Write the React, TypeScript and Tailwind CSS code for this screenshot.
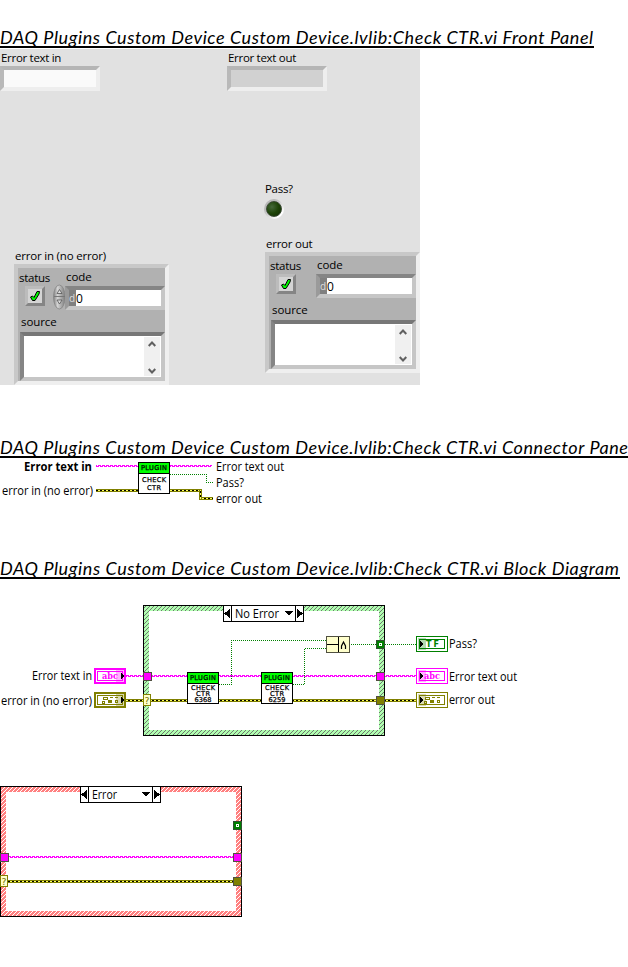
import React from "react";

const FONT = "'Open Sans','Noto Sans',sans-serif";

function Heading({ children, className }: { children: string; className: string }) {
  return (
    <h2
      className={`h-[22px] w-fit overflow-hidden whitespace-nowrap border-b-2 border-black font-[Lato,sans-serif] text-[18px] leading-[22px] italic text-black ${className}`}
    >
      {children}
    </h2>
  );
}

function Check() {
  return (
    <div className="flex h-[20px] w-[20px] items-center justify-center border-[3px] border-t-[#bcbcbc] border-l-[#bcbcbc] border-r-[#858585] border-b-[#858585] bg-[#d4d4d4]">
      <svg width="12" height="12" viewBox="0 0 12 12" className="shrink-0">
        <path d="M1.5 7 L3.5 6 L5 7.5 L8 1.5 L10.5 1.5 L10 4 L6 10.5 L3.5 10.5 Z" fill="#00f800" stroke="#000" strokeWidth="1" />
      </svg>
    </div>
  );
}

function Spinner() {
  return (
    <svg width="13" height="26" viewBox="0 0 13 26" className="shrink-0">
      <defs>
        <linearGradient id="spin" x1="0" x2="1">
          <stop offset="0" stopColor="#808080" />
          <stop offset=".35" stopColor="#d4d4d4" />
          <stop offset="1" stopColor="#7c7c7c" />
        </linearGradient>
      </defs>
      <ellipse cx="6.3" cy="13" rx="5.8" ry="12" fill="url(#spin)" stroke="#858585" strokeWidth=".8" />
      <path d="M1 12.5H12" stroke="#777" />
      <path d="M6.5 5.5L9 9.5H4Z M6.5 20L9 16H4Z" fill="#ddd" stroke="#555" strokeWidth=".8" />
    </svg>
  );
}

function Cluster({ title, spinner, titleClass }: { title: string; spinner?: boolean; titleClass: string }) {
  return (
    <div className="w-[155px]">
      <div className={`h-[17px] whitespace-nowrap pl-px leading-[17px] ${titleClass}`}>{title}</div>
      <div className="h-[121px] border-4 border-t-[#c8c8c8] border-l-[#c8c8c8] border-r-[#efefef] border-b-[#efefef] bg-[#b1b1b1]">
        <div className="flex h-[18px]">
          <div className="w-[48px] pl-px pt-[1px] leading-[18px] tracking-[-0.25px]">status</div>
          <div className="leading-[18px] tracking-[-0.1px]">code</div>
        </div>
        <div className="flex h-[27px]">
          <div className="w-[27px] pl-[7px]">
            <Check />
          </div>
          <div className="-mt-[2px] ml-[8px] w-[12px]">{spinner && <Spinner />}</div>
          <div className="flex h-[24px] w-[100px] border-4 border-t-[#858585] border-l-[#9a9a9a] border-r-[#c6c6c6] border-b-[#c6c6c6] bg-white">
            <div className="w-[7px] shrink-0 bg-[#808080] text-[10px] leading-[16px] text-[#ddd]">d</div>
            <div className="text-[12px] leading-[17px]">0</div>
          </div>
        </div>
        <div className="h-[19px] pl-[3px] leading-[18px] tracking-[-0.1px]">source</div>
        <div className="ml-[2px] flex h-[49px] w-[145px] justify-end border-4 border-t-[#777] border-l-[#858585] border-r-[#c6c6c6] border-b-[#c6c6c6] bg-white">
          <div className="mr-px mt-px flex h-[39px] w-[16px] flex-col items-center justify-between bg-[#f0f0f0] pt-[4px] pb-[2px] text-[#606060]">
            <svg width="8" height="6" viewBox="0 0 8 6"><path d="M.7 5L4 1.5L7.3 5" fill="none" stroke="currentColor" strokeWidth="2" /></svg>
            <svg width="8" height="6" viewBox="0 0 8 6"><path d="M.7 1L4 4.5L7.3 1" fill="none" stroke="currentColor" strokeWidth="2" /></svg>
          </div>
        </div>
      </div>
    </div>
  );
}

function FrontPanel() {
  return (
    <section className="mt-px flex h-[336px] w-[420px] overflow-hidden bg-[#e1e1e1]">
      <div className="w-[227px] shrink-0">
        <div className="h-[17px] pl-px leading-[18px] tracking-[-0.3px]">Error text in</div>
        <div className="h-[25px] w-[100px] border-4 border-t-[#b5b5b5] border-l-[#b9b9b9] border-r-[#eee] border-b-[#eee] bg-[#fafafa]" />
        <div className="mt-[156px] pl-[14px]">
          <Cluster title="error in (no error)" spinner titleClass="tracking-[-0.2px]" />
        </div>
      </div>
      <div className="shrink-0">
        <div className="h-[17px] pl-px leading-[18px] tracking-[-0.3px]">Error text out</div>
        <div className="h-[25px] w-[100px] border-4 border-t-[#b5b5b5] border-l-[#b9b9b9] border-r-[#eee] border-b-[#eee] bg-[#d1d1d1]" />
        <div className="mt-[89px] pl-[38px]">
          <div className="h-[19px] leading-[18px] tracking-[-0.3px]">Pass?</div>
          <div className="-ml-px flex h-[20px] w-[20px] items-center justify-center rounded-full bg-linear-to-br from-[#b8b8b8] from-30% to-white to-80%">
            <div className="h-[16px] w-[16px] rounded-full border border-[#3a4a34] bg-radial-[at_35%_35%] from-[#45683a] via-[#1e4408] to-[#102804]" />
          </div>
          <div className="mt-[16px]">
            <Cluster title="error out" titleClass="tracking-[-0.25px]" />
          </div>
        </div>
      </div>
    </section>
  );
}

type P = { x: number; y: number };

function Txt({ x, y, w, bold, children }: P & { w: number; bold?: boolean; children: string }) {
  return (
    <text x={x} y={y} textLength={w} lengthAdjust="spacingAndGlyphs" fontSize="12" fontWeight={bold ? 700 : 400} fontFamily={FONT}>
      {children}
    </text>
  );
}

function Tiny({ x, y, w, children }: P & { w: number; children: string }) {
  return (
    <text
      x={x}
      y={y}
      textLength={w}
      lengthAdjust="spacing"
      fontSize="6.6"
      stroke="#000"
      strokeWidth=".25"
      fontFamily="'DejaVu Sans',sans-serif"
    >
      {children}
    </text>
  );
}

function Defs() {
  return (
    <defs>
      <pattern id="str" width="4" height="2" patternUnits="userSpaceOnUse">
        <path d="M0 0h3v1h-3z M2 1h2v1h-2z M0 1h1v1h-1z" fill="#ff00ff" />
      </pattern>
      <pattern id="err" width="4" height="1" patternUnits="userSpaceOnUse">
        <rect width="4" height="1" fill="#ffff60" />
        <rect width="2" height="1" fill="#000" />
      </pattern>
      <pattern id="hg" width="4" height="4" patternUnits="userSpaceOnUse">
        <rect width="4" height="4" fill="#b0ffb0" />
        <path d="M3 0h1v1h-1z M2 1h1v1h-1z M1 2h1v1h-1z M0 3h1v1h-1z" fill="#707870" />
      </pattern>
      <pattern id="hr" width="4" height="4" patternUnits="userSpaceOnUse">
        <rect width="4" height="4" fill="#ff8080" />
        <path d="M3 0h1v1h-1z M2 1h1v1h-1z M1 2h1v1h-1z M0 3h1v1h-1z" fill="#fff" />
      </pattern>
    </defs>
  );
}

function StrWire({ x1, x2, y }: { x1: number; x2: number; y: number }) {
  return <rect x={x1} y={y} width={x2 - x1} height="2" fill="url(#str)" />;
}
function ErrWire({ x1, x2, y }: { x1: number; x2: number; y: number }) {
  return (
    <>
      <rect x={x1} y={y} width={x2 - x1} height="3" fill="#808000" />
      <rect x={x1} y={y + 1} width={x2 - x1} height="1" fill="url(#err)" />
    </>
  );
}
function Dots({ d }: { d: string }) {
  return <path d={d} fill="none" stroke="#008000" strokeDasharray="1 1" />;
}

function ViIcon({ x, y, lines }: P & { lines: string[] }) {
  const two = lines.length === 2;
  return (
    <g>
      <rect x={x + 0.5} y={y + 0.5} width="31" height="31" fill="#fff" stroke="#000" />
      <rect x={x + 1} y={y + 1} width="30" height="10" fill="#00ff00" />
      <rect x={x} y={y + 11} width="32" height="1" />
      <Tiny x={x + 3} y={y + 8.3} w={26}>PLUGIN</Tiny>
      {lines.map((l, i) => {
        const w = l.length === 5 ? 24 : l.length === 4 ? 17 : 14;
        return (
          <Tiny key={l} x={x + 16 - w / 2} y={two ? y + 20.3 + i * 8 : y + 18 + i * 6.1} w={w}>
            {l}
          </Tiny>
        );
      })}
    </g>
  );
}

function Tunnel({ x, y, fill }: P & { fill: string }) {
  return <rect x={x + 0.5} y={y + 0.5} width="8" height="8" fill={fill} stroke="#505040" />;
}
function BoolTunnel({ x, y }: P) {
  return (
    <g>
      <rect x={x + 0.5} y={y + 0.5} width="8" height="8" fill="#008000" stroke="#305030" />
      <rect x={x + 3} y={y + 3} width="3" height="3" fill="#fff" />
      <rect x={x + 4} y={y + 4} width="1" height="1" fill="#008000" />
    </g>
  );
}
function Ask({ x, y }: P) {
  return (
    <g>
      <rect x={x + 0.5} y={y + 0.5} width="7" height="11" fill="#ffffcc" stroke="#808000" />
      <text x={x + 1.5} y={y + 9.5} fontSize="9.5" fill="#707000" textLength="5" lengthAdjust="spacingAndGlyphs" fontFamily="'DejaVu Sans',sans-serif">?</text>
    </g>
  );
}

function Terminal({ x, y, color, kind, input }: P & { color: string; kind: "abc" | "TF" | "err"; input?: boolean }) {
  const tf = kind === "TF";
  return (
    <g>
      <rect x={x + 0.5} y={y + 0.5} width="31" height="15" fill="#fff" stroke={color} />
      {input && <rect x={x + 1.5} y={y + 1.5} width="29" height="13" fill="none" stroke={color} />}
      <rect x={x + 3.5} y={y + 3.5} width="25" height="9" fill="none" stroke={color} />
      {kind === "err" ? (
        <path
          transform={`translate(${x + 7},${y + 5})`}
          fill={color}
          fillRule="evenodd"
          d="M2 0h5v3h-5z M3 1v1h3v-1z M9 0h3v1h-3z M14 0h3v1h-3z M1 4h3v3h-3z M2 5v1h1v-1z M7 3h4v3h-4z M14 3h3v3h-3z M15 4v1h1v-1z"
        />
      ) : (
        <text
          x={x + (tf ? 10 : 8)}
          y={y + 11}
          fontSize={tf ? 8 : 9.5}
          fontWeight="700"
          fill={color}
          textLength={tf ? 13 : 16}
          lengthAdjust={tf ? "spacing" : "spacingAndGlyphs"}
          fontFamily={tf ? "'DejaVu Sans',sans-serif" : "'DejaVu Serif',serif"}
        >
          {kind}
        </text>
      )}
      <rect x={input ? x + 22 : x + 2} y={y + 2} width="8" height="12" fill={color} opacity=".3" />
      <path d={input ? `M${x + 27} ${y + 5}v6l3-3z` : `M${x + 4} ${y + 5}v6l3-3z`} fill="#000" stroke="#000" strokeWidth=".6" />
    </g>
  );
}

function Case({ x, y, hatch, label, w }: P & { hatch: string; label: string; w: number }) {
  return (
    <g>
      <rect x={x} y={y} width="242" height="131" />
      <rect x={x + 1} y={y + 1} width="240" height="129" fill={hatch} />
      <rect x={x + 6} y={y + 6} width="230" height="119" fill="#fff" />
      <rect x={x + 80.5} y={y + 0.5} width="80" height="16" fill="#fff" stroke="#000" />
      <path d={`M${x + 88.5} ${y}v17M${x + 152.5} ${y}v17`} stroke="#000" />
      <path d={`M${x + 81} ${y + 8.5}l6-4.5v9zM${x + 160} ${y + 8.5}l-6-4.5v9zM${x + 142} ${y + 6}h8l-4 4.5z`} />
      <Txt x={x + 92} y={y + 13} w={w}>{label}</Txt>
    </g>
  );
}

function ConnectorPane() {
  return (
    <svg className="block" width="628" height="52" viewBox="0 458 628 52" shapeRendering="crispEdges">
      <Defs />
      <StrWire x1={96} x2={138} y={465} />
      <StrWire x1={170} x2={212} y={465} />
      <ErrWire x1={96} x2={138} y={489} />
      <ErrWire x1={170} x2={202} y={489} />
      <ErrWire x1={199} x2={213} y={497} />
      <rect x="199" y="490" width="3" height="9" fill="#808000" />
      <path d="M200.5 490v9" stroke="#ffff60" />
      <path d="M200.5 491v8" stroke="#000" strokeDasharray="2 2" />
      <Dots d="M170 474.5H206.5V482.5H213" />
      <ViIcon x={138} y={462} lines={["CHECK", "CTR"]} />
      <Txt x={24} y={471} w={68} bold>Error text in</Txt>
      <Txt x={2} y={495} w={91}>error in (no error)</Txt>
      <Txt x={216} y={471} w={68}>Error text out</Txt>
      <Txt x={216} y={487} w={28}>Pass?</Txt>
      <Txt x={216} y={503} w={46}>error out</Txt>
    </svg>
  );
}

function NoErrorDiagram() {
  return (
    <svg className="block" width="628" height="131" viewBox="0 605 628 131" shapeRendering="crispEdges">
      <Case x={143} y={605} hatch="url(#hg)" label="No Error" w={44} />
      <StrWire x1={126} x2={380} y={675} />
      <StrWire x1={385} x2={416} y={675} />
      <ErrWire x1={126} x2={416} y={699} />
      <Dots d="M219 684.5H231.5V640.5H326" />
      <Dots d="M293 684.5H304.5V648.5H326" />
      <Dots d="M351 644.5H416" />
      <ViIcon x={187} y={672} lines={["CHECK", "CTR", "6368"]} />
      <ViIcon x={261} y={672} lines={["CHECK", "CTR", "6259"]} />
      <rect x="326.5" y="636.5" width="23" height="16" fill="#ffffcc" stroke="#505040" />
      <path d="M327 644.5H338M338.5 637V652" stroke="#000" />
      <path d="M341.5 649V646L343.5 642L345.5 646V649" fill="none" stroke="#000" strokeWidth="1.2" shapeRendering="auto" />
      <BoolTunnel x={376} y={640} />
      <Tunnel x={376} y={672} fill="#ff00ff" />
      <Tunnel x={376} y={696} fill="#808000" />
      <Tunnel x={143} y={672} fill="#ff00ff" />
      <Ask x={143} y={694} />
      <Terminal x={94} y={668} color="#ff00ff" kind="abc" input />
      <Terminal x={94} y={692} color="#808000" kind="err" input />
      <Terminal x={416} y={636} color="#008000" kind="TF" />
      <Terminal x={416} y={668} color="#ff00ff" kind="abc" />
      <Terminal x={416} y={692} color="#808000" kind="err" />
      <Txt x={32} y={680} w={60}>Error text in</Txt>
      <Txt x={1} y={705} w={91}>error in (no error)</Txt>
      <Txt x={449} y={648} w={28}>Pass?</Txt>
      <Txt x={449} y={681} w={68}>Error text out</Txt>
      <Txt x={449} y={704} w={46}>error out</Txt>
    </svg>
  );
}

function ErrorDiagram() {
  return (
    <svg className="mt-[50px] block" width="628" height="131" viewBox="0 786 628 131" shapeRendering="crispEdges">
      <Case x={0} y={786} hatch="url(#hr)" label="Error" w={25} />
      <StrWire x1={9} x2={233} y={856} />
      <ErrWire x1={8} x2={233} y={880} />
      <BoolTunnel x={233} y={821} />
      <Tunnel x={0} y={853} fill="#ff00ff" />
      <Tunnel x={233} y={853} fill="#ff00ff" />
      <Tunnel x={233} y={877} fill="#808000" />
      <Ask x={0} y={875} />
    </svg>
  );
}

export default function App() {
  return (
    <main className="h-[967px] w-[628px] overflow-hidden bg-white pt-[26px] font-['Open_Sans','Noto_Sans',sans-serif] text-[11.5px] text-black">
      <Heading className="tracking-[0.58px]">DAQ Plugins Custom Device Custom Device.lvlib:Check CTR.vi Front Panel</Heading>
      <FrontPanel />
      <Heading className="mt-[51px] tracking-[0.57px]">DAQ Plugins Custom Device Custom Device.lvlib:Check CTR.vi Connector Pane</Heading>
      <ConnectorPane />
      <Heading className="mt-[47px] tracking-[0.59px]">DAQ Plugins Custom Device Custom Device.lvlib:Check CTR.vi Block Diagram</Heading>
      <div className="mt-[26px]">
        <NoErrorDiagram />
        <ErrorDiagram />
      </div>
    </main>
  );
}
